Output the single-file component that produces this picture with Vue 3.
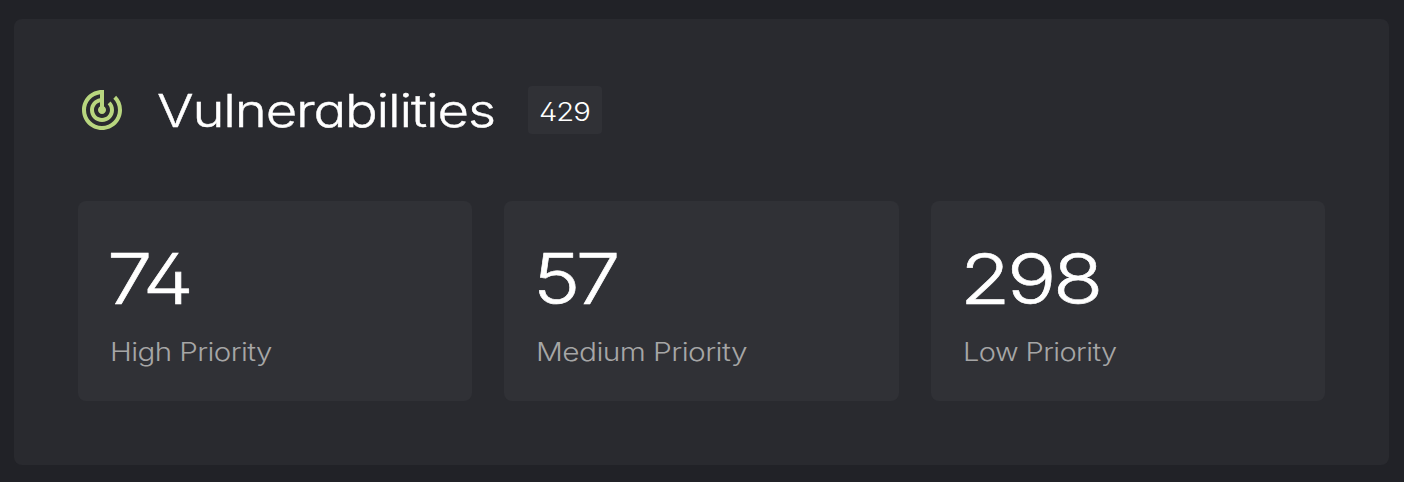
<script setup>
const stats = [
  { value: '74', label: 'High Priority', valueScale: 1.16, labelScale: 1.18, tracking: -4, offset: -3 },
  { value: '57', label: 'Medium Priority', valueScale: 1.14, labelScale: 1.195, tracking: -4, offset: -3 },
  { value: '298', label: 'Low Priority', valueScale: 1.175, labelScale: 1.16, tracking: -3, offset: -2.5 },
]
</script>

<template>
  <main class="page">
    <section class="panel">
      <header class="header">
        <svg class="icon" viewBox="0 0 24 24" aria-hidden="true">
          <path d="M19.07 4.93l-1.41 1.41C19.1 7.79 20 9.79 20 12c0 4.42-3.58 8-8 8s-8-3.58-8-8c0-4.08 3.05-7.44 7-7.93v2.02C8.16 6.57 6 9.03 6 12c0 3.31 2.69 6 6 6s6-2.69 6-6c0-1.66-.67-3.16-1.76-4.24l-1.41 1.41C15.55 9.9 16 10.9 16 12c0 2.21-1.79 4-4 4s-4-1.79-4-4c0-1.86 1.28-3.41 3-3.86v2.14c-.6.35-1 .98-1 1.72 0 1.1.9 2 2 2s2-.9 2-2c0-.74-.4-1.38-1-1.72V2h-1C6.48 2 2 6.48 2 12s4.48 10 10 10 10-4.48 10-10c0-2.76-1.12-5.26-2.93-7.07z" />
        </svg>
        <h1 class="title"><span class="wide">Vulnerabilities</span></h1>
        <span class="badge"><span class="count">429</span></span>
      </header>
      <div class="cards">
        <article v-for="s in stats" :key="s.label" class="card">
          <div class="value">
            <span
              class="wide"
              :style="{ transform: `scaleX(${s.valueScale})`, letterSpacing: `${s.tracking}px`, marginLeft: `${s.offset}px` }"
            >{{ s.value }}</span>
          </div>
          <div class="label"><span class="wide" :style="{ transform: `scaleX(${s.labelScale})` }">{{ s.label }}</span></div>
        </article>
      </div>
    </section>
  </main>
</template>

<style>
body {
  background: #212227;
}
</style>

<style scoped>
.page {
  box-sizing: border-box;
  height: 482px;
  padding: 19px 15px 17px 14px;
  background: #212227;
  color: #fff;
  font-family: Inter, "Liberation Sans", sans-serif;
  font-weight: 300;
  font-feature-settings: "cv11", "cv02";
}
.panel {
  box-sizing: border-box;
  height: 446px;
  padding: 67px 64px 64px;
  border-radius: 8px;
  background: #292a2f;
}
.header {
  display: flex;
  align-items: center;
  height: 48px;
}
.icon {
  width: 48px;
  height: 48px;
  margin-right: 31px;
  fill: #b8d67f;
}
.title {
  width: 371px;
  margin: 0;
  padding-top: 1px;
  font-size: 45px;
  font-weight: 300;
  line-height: 48px;
  letter-spacing: -1px;
  white-space: nowrap;
  -webkit-text-stroke: 0.4px #fff;
}
.wide {
  display: inline-block;
  transform-origin: left center;
}
.title .wide {
  transform: scaleX(1.21);
}
.badge {
  display: flex;
  align-items: center;
  justify-content: center;
  width: 74px;
  height: 48px;
  border-radius: 4px;
  background: #303136;
  font-size: 26px;
  line-height: 48px;
}
.count {
  display: inline-block;
  padding: 3px 2px 0 0;
  letter-spacing: -1px;
  transform: scaleX(1.125);
}
.cards {
  display: grid;
  grid-template-columns: repeat(3, 1fr);
  gap: 32px;
  margin-top: 67px;
}
.card {
  box-sizing: border-box;
  height: 200px;
  padding: 42px 32px 0;
  border-radius: 8px;
  background: #303136;
}
.value {
  font-size: 70px;
  line-height: 72px;
  white-space: nowrap;
  -webkit-text-stroke: 0.6px #fff;
}
.label {
  margin-top: 21px;
  color: #a6a6a6;
  font-size: 25px;
  line-height: 32px;
  letter-spacing: -0.5px;
  white-space: nowrap;
}
</style>
